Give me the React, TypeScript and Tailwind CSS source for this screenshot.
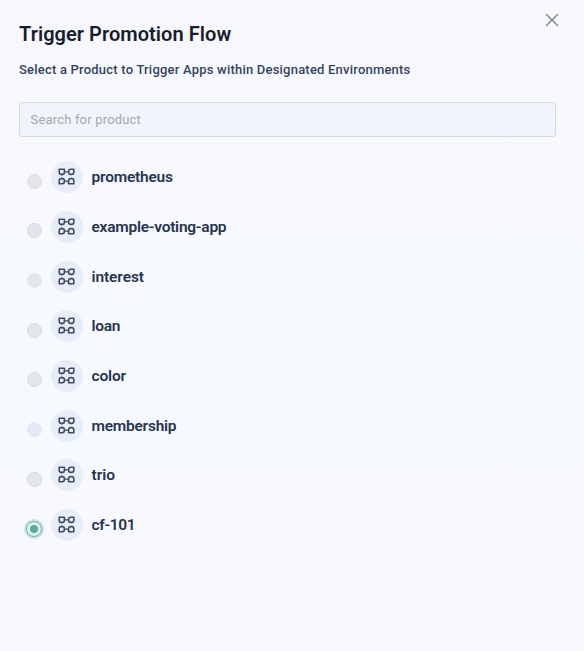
import { useState } from "react";

type Product = { name: string; radio: string; spacing: string };

const products: Product[] = [
  { name: "prometheus", radio: "border-[#dfe1e7] bg-[#e5e6eb]", spacing: "tracking-[-0.22px]" },
  { name: "example-voting-app", radio: "border-[#d4d8e1] bg-[#e2e5ee]", spacing: "tracking-[-0.25px]" },
  { name: "interest", radio: "border-[#e4e6eb] bg-[#e6e7ec]", spacing: "tracking-[-0.1px]" },
  { name: "loan", radio: "border-[#d7dae0] bg-[#e3e6eb]", spacing: "tracking-[-0.25px]" },
  { name: "color", radio: "border-[#d7dae0] bg-[#e3e6eb]", spacing: "tracking-[-0.15px]" },
  { name: "membership", radio: "border-[#e5e8f6] bg-[#e5e8f6]", spacing: "tracking-[-0.25px]" },
  { name: "trio", radio: "border-[#d4d7de] bg-[#e3e6eb]", spacing: "tracking-[0px]" },
  { name: "cf-101", radio: "border-[#d4d7de] bg-[#e3e6eb]", spacing: "tracking-[-0.35px]" },
];

function ProductIcon() {
  return (
    <svg width="18" height="18" viewBox="0 0 18 18" fill="none" stroke="#424b65" strokeWidth="1.6" strokeLinejoin="round">
      <path d="M1.2 1.2H6.4V4.2A2.2 2.2 0 0 1 4.2 6.4H3.4A2.2 2.2 0 0 1 1.2 4.2Z" />
      <path d="M15.8 1.2H12.8A2.2 2.2 0 0 0 10.6 3.4V4.2A2.2 2.2 0 0 0 12.8 6.4H13.6A2.2 2.2 0 0 0 15.8 4.2Z" />
      <path d="M1.2 15.8V12.8A2.2 2.2 0 0 1 3.4 10.6H4.2A2.2 2.2 0 0 1 6.4 12.8V13.6A2.2 2.2 0 0 1 4.2 15.8Z" />
      <path d="M10.6 15.8V12.8A2.2 2.2 0 0 1 12.8 10.6H13.6A2.2 2.2 0 0 1 15.8 12.8V15.8Z" />
      <path d="M6.8 3.8H10.2M6.8 13.2H10.2" strokeWidth="1.3" />
      <path d="M3.8 7V7.8M3.8 9.4V10.2" strokeWidth="0.8" />
    </svg>
  );
}

export default function App() {
  const [selected, setSelected] = useState("cf-101");
  return (
    <main className="flex h-[651px] w-full flex-col bg-[linear-gradient(180deg,#f7f8fe_0%,#f8f9fe_25%,#f6fafe_50%,#f7f9fe_75%,#f7f9fe_100%)] pl-[19px] font-['Roboto','Liberation_Sans',sans-serif]">
      <header className="flex h-[46px] justify-between pr-[25px]">
        <h1 className="pt-[20px] text-[20px] leading-[28px] font-semibold tracking-[0.05px] whitespace-nowrap text-[#171d2c]">Trigger Promotion Flow</h1>
        <button aria-label="Close" className="mt-[13px] h-[14px] w-[14px]">
          <svg width="14" height="14" viewBox="0 0 14 14" fill="none" stroke="#7b7f89" strokeWidth="1.4" strokeLinecap="round">
            <path d="M1.5 1.5L12.5 12.5M12.5 1.5L1.5 12.5" />
          </svg>
        </button>
      </header>
      <p className="mt-[14px] text-[13px] leading-[20px] font-medium tracking-[0.21px] whitespace-nowrap text-[#32445f]">Select a Product to Trigger Apps within Designated Environments</p>
      <input
        placeholder="Search for product"
        className="mt-[22px] h-[35px] w-[537px] shrink-0 rounded-[3px] border border-[#d5d9e4] bg-[#f0f4fc] px-[10.5px] text-[13px] tracking-[0.18px] text-[#32445f] outline-none placeholder:text-[#a5a8b4]"
      />
      <ul className="mt-[15.4px] flex flex-col">
        {products.map((p) => (
          <li key={p.name}>
            <button onClick={() => setSelected(p.name)} className="flex h-[49.7px] w-full items-center text-left">
              <span className="mt-[8px] ml-[5px] flex h-[20px] w-[20px] items-center justify-center">
                {selected === p.name ? (
                  <span className="flex h-[20px] w-[20px] shrink-0 items-center justify-center rounded-full bg-[#c8e3e1]">
                    <span className="flex h-[16px] w-[16px] items-center justify-center rounded-full border-[1.5px] border-[#69b5a9] bg-[#def2ef]">
                      <span className="h-[8px] w-[8px] rounded-full bg-[#5aa99e]" />
                    </span>
                  </span>
                ) : (
                  <span className={`h-[15px] w-[15px] rounded-full border ${p.radio}`} />
                )}
              </span>
              <span className="ml-[7px] flex h-[32px] w-[32px] items-center justify-center rounded-full bg-[#e8eef9]">
                <ProductIcon />
              </span>
              <span className={`ml-[8.5px] text-[15.5px] leading-[20px] font-semibold text-[#26344f] ${p.spacing}`}>{p.name}</span>
            </button>
          </li>
        ))}
      </ul>
    </main>
  );
}
